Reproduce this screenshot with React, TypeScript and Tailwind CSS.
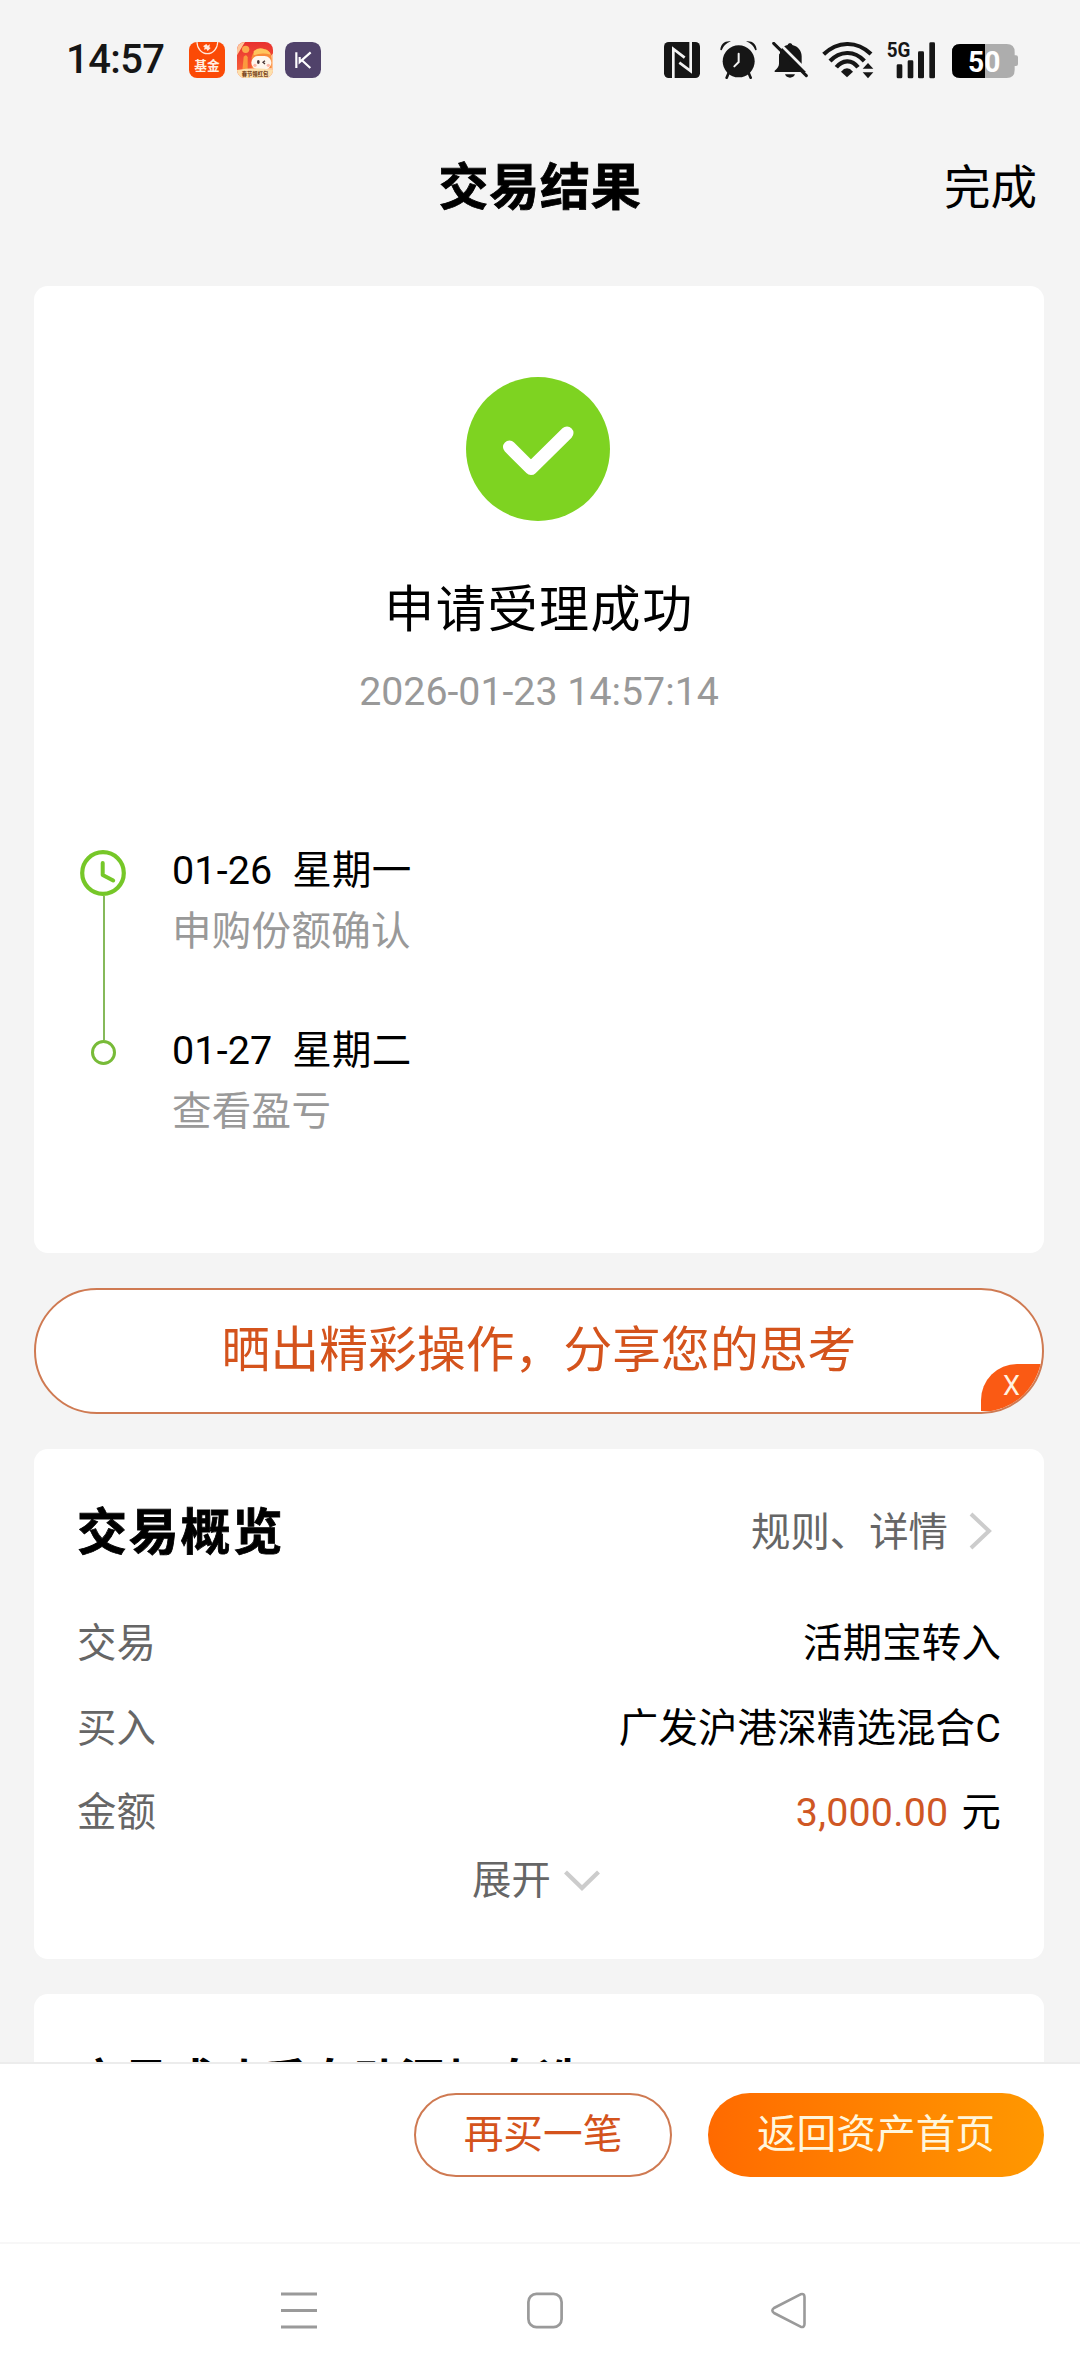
import type { ReactNode } from "react";

const INK = "#161616";

function FundIcon() {
  return (
    <svg width="36" height="36" viewBox="0 0 108 108">
      <rect width="108" height="108" rx="24" fill="#fb4a06" />
      <path d="M24 0a31 35 0 0 0 62 0" fill="none" stroke="#ffe9dc" strokeWidth="3.5" />
      <path d="M42 13l10-7 4 5 7-4-2 9 4 2-9 9-4-6-7 2 2-7z" fill="#ffe9dc" />
      <text x="54" y="83" textAnchor="middle" fontSize="38" fontWeight="700" fill="#fff0e2" fontFamily="'Noto Sans CJK SC', sans-serif">基金</text>
    </svg>
  );
}

function MascotIcon() {
  return (
    <svg width="36" height="36" viewBox="0 0 108 108">
      <defs>
        <clipPath id="mascot"><rect width="108" height="108" rx="24" /></clipPath>
        <linearGradient id="mascotBg" x1="0" y1="0" x2="0" y2="1">
          <stop offset="0" stopColor="#e8302e" />
          <stop offset="1" stopColor="#fb6a3c" />
        </linearGradient>
      </defs>
      <g clipPath="url(#mascot)">
        <rect width="108" height="108" fill="url(#mascotBg)" />
        <path d="M0 10C2 4 6 0 14 0h10L0 40zM108 34v60H60z" fill="#ffc69a" />
        <circle cx="26" cy="22" r="11" fill="#fba94c" />
        <path d="M20 44q8-10 12 2v40H16z" fill="#fb9a3e" />
        <path d="M44 46c4-20 20-26 34-26 18 2 26 16 26 34v24H44z" fill="#f98b3a" />
        <path d="M50 28q14-14 32-6 14 2 20 16-28-8-52 2z" fill="#ffc45c" />
        <rect x="43" y="42" width="60" height="40" rx="20" fill="#fff6ee" />
        <ellipse cx="64" cy="60" rx="4" ry="6" fill="#4b3838" />
        <path d="M84 56l-6 5 6 5" fill="none" stroke="#4b3838" strokeWidth="4" />
        <circle cx="54" cy="70" r="5" fill="#ffb8a6" />
        <circle cx="94" cy="70" r="5" fill="#ffb8a6" />
        <path d="M0 84q54-10 108 0v24H0z" fill="#fde0ac" />
        <text x="54" y="102" textAnchor="middle" fontSize="16" fontWeight="900" fill="#7c4a26" fontFamily="'Noto Sans CJK SC', sans-serif">春节领红包</text>
      </g>
    </svg>
  );
}

function KeepIcon() {
  return (
    <svg width="36" height="36" viewBox="0 0 108 108">
      <rect width="108" height="108" rx="26" fill="#50426a" />
      <path d="M34 31v47M77 31L44 60V45M50 54l26 24" fill="none" stroke="#fff" strokeWidth="6.5" />
    </svg>
  );
}

function NfcIcon() {
  return (
    <svg width="36" height="36" viewBox="0 0 108 108">
      <rect width="108" height="108" rx="14" fill={INK} />
      <path d="M28 108V21l34 26M80 0v87L46 62" fill="none" stroke="#f4f4f4" strokeWidth="8" />
    </svg>
  );
}

function AlarmIcon() {
  return (
    <svg width="37" height="38" viewBox="0 0 111 114">
      <path d="M30 86L20 110M82 86l10 24" stroke={INK} strokeWidth="8" strokeLinecap="round" />
      <circle cx="56" cy="61" r="48" fill={INK} />
      <path d="M1 27C2 8 16-2 33 1Q12 9 5 28zM110 27C109 8 95-2 78 1q21 8 28 27z" fill={INK} />
      <path d="M56 38v25L43 76" fill="none" stroke="#f4f4f4" strokeWidth="6" strokeLinecap="round" />
    </svg>
  );
}

function BellOffIcon() {
  return (
    <svg width="36" height="37" viewBox="0 0 108 111">
      <path d="M54 4c4 0 6 2 7 5 18 4 28 18 28 34v23q0 9 13 20v4H8v-4q13-10 13-21V43C21 25 31 13 47 9c1-3 3-5 7-5z" fill={INK} />
      <path d="M39 97h30q-4 10-15 10T39 97z" fill={INK} />
      <path d="M13-5l107 107" stroke="#f4f4f4" strokeWidth="8" />
      <path d="M0 0h24v36L0 20z" fill="#f4f4f4" />
      <path d="M5 4l98 97" stroke={INK} strokeWidth="9" strokeLinecap="round" />
    </svg>
  );
}

function WifiIcon() {
  return (
    <svg width="52" height="38" viewBox="0 0 156 114">
      <g fill="none" stroke={INK} strokeWidth="12.5">
        <path d="M5 40Q36 10 75 9t72 30" />
        <path d="M24 60Q46 37 75 36t52 24" />
        <path d="M43 79Q56 62 75 61t33 18" />
      </g>
      <path d="M57 92Q75 72 93 92L75 109z" fill={INK} />
      <path d="M138 66l16 17h-32zM138 112l16-18h-32z" fill={INK} />
    </svg>
  );
}

function SignalIcon() {
  return (
    <svg className="overflow-visible" width="49" height="37" viewBox="0 0 147 111">
      <text x="-1" y="45" fontSize="63" fontWeight="700" textLength="71" lengthAdjust="spacingAndGlyphs" fill={INK} fontFamily="Roboto, sans-serif">5G</text>
      <g fill={INK}>
        <rect x="29" y="67" width="17" height="42" rx="4" />
        <rect x="62" y="55" width="17" height="54" rx="4" />
        <rect x="93" y="28" width="18" height="81" rx="4" />
        <rect x="127" y="1" width="17" height="108" rx="4" />
      </g>
    </svg>
  );
}

function BatteryIcon() {
  return (
    <svg width="66" height="34" viewBox="0 0 198 102">
      <defs>
        <clipPath id="battery"><path d="M24 0h140q24 0 24 24v10h4q6 0 6 6v20q0 6-6 6h-4v12q0 24-24 24H24Q0 102 0 78V24Q0 0 24 0z" /></clipPath>
      </defs>
      <g clipPath="url(#battery)">
        <rect width="198" height="102" fill="#adadad" />
        <rect width="99" height="102" fill="#000" />
      </g>
      <text x="48" y="84" fontSize="90" fontWeight="700" textLength="97" lengthAdjust="spacingAndGlyphs" fill="#fff" fontFamily="Roboto, sans-serif">50</text>
    </svg>
  );
}

function StatusBar() {
  return (
    <div className="flex h-[120px] shrink-0 items-center pl-[66px] pr-[62px]">
      <span className="w-[123px] text-[40px] font-medium leading-[48px] tracking-[-0.600px] text-[#161616]">14:57</span>
      <div className="flex gap-3">
        <FundIcon />
        <MascotIcon />
        <KeepIcon />
      </div>
      <div className="ml-auto flex items-center">
        <NfcIcon />
        <div className="ml-5"><AlarmIcon /></div>
        <div className="ml-[15px]"><BellOffIcon /></div>
        <div className="ml-[14px]"><WifiIcon /></div>
        <div className="ml-[13px]"><SignalIcon /></div>
        <div className="ml-4 pt-0.5"><BatteryIcon /></div>
      </div>
    </div>
  );
}

function TimelineText({ date, day, note }: { date: string; day: string; note: string }) {
  return (
    <div className="h-[180px] text-[39.5px]">
      <div className="h-[61px] whitespace-pre leading-[51px] tracking-[0.150px] text-black">{`${date}  ${day}`}</div>
      <div className="leading-[51px] tracking-[0.300px] text-[#999]">{note}</div>
    </div>
  );
}

function ResultCard() {
  return (
    <section className="flex h-[967px] shrink-0 flex-col items-center rounded-[14px] bg-white pt-[91px]">
      <svg className="-ml-0.5 shrink-0" width="144" height="144" viewBox="0 0 144 144">
        <circle cx="72" cy="72" r="72" fill="#7ed321" />
        <path d="M43.500 70l21.500 21.500L101 56" fill="none" stroke="#fff" strokeWidth="13" strokeLinecap="round" strokeLinejoin="round" />
      </svg>
      <h2 className="mt-[59px] text-[50px] leading-[60px] tracking-[1.600px] text-black">申请受理成功</h2>
      <p className="mt-[27px] text-[39.300px] leading-[50px] text-[#999]">2026-01-23 14:57:14</p>
      <div className="mt-[128px] flex self-stretch pl-[46px]">
        <div className="flex w-[46px] flex-col items-center pt-[5px]">
          <svg width="46" height="46" viewBox="0 0 46 46" fill="none" stroke="#76c728">
            <circle cx="23" cy="23" r="20.800" strokeWidth="4.200" />
            <path d="M22.700 13v12l10.500 5.500" strokeWidth="4" strokeLinecap="round" strokeLinejoin="round" />
          </svg>
          <div className="ml-px h-[144px] w-0.5 bg-[#86b95a]" />
          <div className="size-[25px] rounded-full border-[3px] border-[#78bb38]" />
        </div>
        <div className="ml-[46px]">
          <TimelineText date="01-26" day="星期一" note="申购份额确认" />
          <TimelineText date="01-27" day="星期二" note="查看盈亏" />
        </div>
      </div>
    </section>
  );
}

function ShareBanner() {
  return (
    <div className="relative mt-[35px] flex h-[126px] shrink-0 items-center justify-center overflow-hidden rounded-full border-2 border-[#cf7a52] bg-white">
      <span className="text-[48.700px] leading-[60px] tracking-[0.150px] text-[#d4531c]">晒出精彩操作，分享您的思考</span>
      <span className="absolute bottom-px right-0 flex h-[47px] w-[61px] items-center justify-center rounded-tl-[36px] bg-[#fa5a14] pb-0.5 text-[27px] leading-none text-[#fff3e0]">X</span>
    </div>
  );
}

function Row({ label, children }: { label: string; children: ReactNode }) {
  return (
    <div className="flex h-[84.500px] items-center justify-between tracking-[0.200px]">
      <span className="text-[#666]">{label}</span>
      <span className="text-black">{children}</span>
    </div>
  );
}

function OverviewCard() {
  return (
    <section className="mt-[35px] h-[510px] shrink-0 rounded-[14px] bg-white pl-[43px] pr-[43px] pt-[50px] text-[39.400px] leading-[50px]">
      <div className="flex h-[68px] items-center justify-between">
        <h2 className="text-[50px] font-bold tracking-[1.800px] text-black [-webkit-text-stroke:0.8px_black]">交易概览</h2>
        <div className="mr-[9px] flex items-center text-[#666]">
          <span>规则、详情</span>
          <svg className="-mt-1 ml-[21px]" width="23" height="38" viewBox="0 0 23 38">
            <path d="M2 2l18 17L2 36" fill="none" stroke="#ccc" strokeWidth="4" />
          </svg>
        </div>
      </div>
      <div className="mt-[35px]">
        <Row label="交易">活期宝转入</Row>
        <Row label="买入">广发沪港深精选混合C</Row>
        <Row label="金额"><span className="mr-[3px] text-[#cf5724]">3,000.00</span> 元</Row>
      </div>
      <div className="flex items-center pl-[395px] text-[#666]">
        <span>展开</span>
        <svg className="ml-[13px]" width="36" height="22" viewBox="0 0 36 22">
          <path d="M1.500 2L18 18 34.500 2" fill="none" stroke="#ccc" strokeWidth="4.200" />
        </svg>
      </div>
    </section>
  );
}

function ActionBar() {
  return (
    <div className="flex h-[180px] shrink-0 items-start justify-end gap-9 border-t-2 border-[#ececec] bg-white pr-9 pt-[29px] text-[39.700px] leading-[80px]">
      <button className="h-[84px] w-[258px] rounded-full border-2 border-[#cf7a52] text-[#d4531c]">再买一笔</button>
      <button className="h-[84px] w-[336px] rounded-full bg-gradient-to-r from-[#ff6a00] to-[#ff9800] text-[#fff6dc]">返回资产首页</button>
    </div>
  );
}

function NavBar() {
  return (
    <div className="flex h-[134px] shrink-0 items-center border-t-2 border-[#f7f7f7] bg-white pl-[281px]">
      <svg width="36" height="37" viewBox="0 0 36 37" stroke="#9a9a9a" strokeWidth="3">
        <path d="M0 2h36M0 18.500h36M0 35h36" />
      </svg>
      <svg className="ml-[210px]" width="36" height="37" viewBox="0 0 36 37" fill="none" stroke="#9a9a9a" strokeWidth="2.700">
        <rect x="1.400" y="1.900" width="33.200" height="33.200" rx="8" />
      </svg>
      <svg className="ml-[208px]" width="36" height="37" viewBox="0 0 36 37" fill="none" stroke="#9a9a9a" strokeWidth="2.600" strokeLinejoin="round">
        <path d="M3 16L29.500 2.300Q33.500 1 33.500 5v27q0 4-4 2.700L3 21Q-.300 18.500 3 16z" />
      </svg>
    </div>
  );
}

export default function App() {
  return (
    <div className="flex h-[2376px] w-[1080px] flex-col overflow-hidden bg-[#f4f4f4] font-[Roboto,'Noto_Sans_CJK_SC',sans-serif]">
      <StatusBar />
      <header className="grid h-[136px] shrink-0 grid-cols-[1fr_auto_1fr] items-center px-[43px]">
        <h1 className="col-start-2 text-[50px] font-bold leading-[60px] tracking-[0.800px] text-black [-webkit-text-stroke:0.8px_black]">交易结果</h1>
        <span className="text-right text-[46.500px] leading-[60px] text-black">完成</span>
      </header>
      <main className="mt-[30px] flex min-h-0 flex-1 flex-col overflow-hidden pl-[34px] pr-9">
        <ResultCard />
        <ShareBanner />
        <OverviewCard />
        <section className="mt-[35px] h-[200px] shrink-0 rounded-t-[14px] bg-white pl-[43px] pt-[55px]">
          <h2 className="text-[45.500px] font-bold leading-[66px] tracking-[0.600px] text-black">交易成功后自动添加自选</h2>
        </section>
      </main>
      <ActionBar />
      <NavBar />
    </div>
  );
}
